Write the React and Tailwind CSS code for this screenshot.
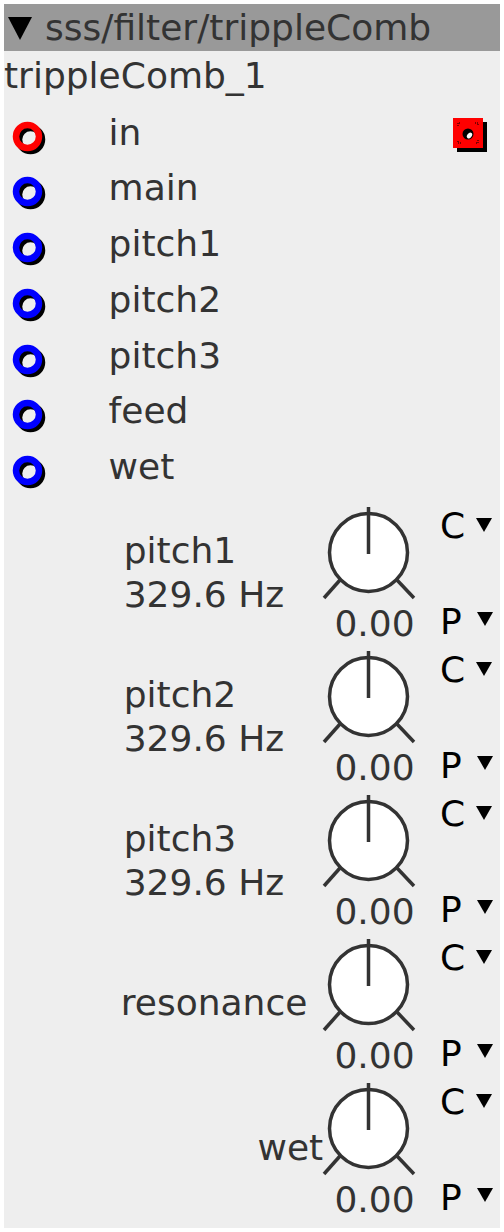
import React from "react";

const ports = [
  { name: "in", color: "#ff0000", audio: true },
  { name: "main", color: "#0000ff" },
  { name: "pitch1", color: "#0000ff" },
  { name: "pitch2", color: "#0000ff" },
  { name: "pitch3", color: "#0000ff" },
  { name: "feed", color: "#0000ff" },
  { name: "wet", color: "#0000ff" },
];

const knobs = [
  { lines: ["pitch1", "329.6 Hz"], labelClass: "w-[316px] shrink-0 whitespace-nowrap pl-[119.7px] pt-[34px] leading-[44px]" },
  { lines: ["pitch2", "329.6 Hz"], labelClass: "w-[316px] shrink-0 whitespace-nowrap pl-[119.7px] pt-[34px] leading-[44px]" },
  { lines: ["pitch3", "329.6 Hz"], labelClass: "w-[316px] shrink-0 whitespace-nowrap pl-[119.7px] pt-[34px] leading-[44px]" },
  { lines: ["resonance"], labelClass: "w-[316px] shrink-0 whitespace-nowrap pl-[116.8px] pt-[54px] leading-[44px]" },
  { lines: ["wet"], labelClass: "w-[316px] shrink-0 whitespace-nowrap pl-[253.5px] pt-[55px] leading-[44px]" },
];

function PortRing({ color }) {
  return (
    <svg width="38" height="38" viewBox="0 0 38 38" className="ml-[8px] mt-[16px] shrink-0">
      <circle cx="18.5" cy="18.5" r="11.5" fill="none" stroke="#000" strokeWidth="6.5" />
      <circle cx="15.5" cy="15.5" r="11.5" fill="none" stroke={color} strokeWidth="6.5" />
    </svg>
  );
}

function AudioOut() {
  return (
    <svg width="36" height="36" viewBox="0 0 36 36" className="ml-auto mr-[11px] mt-[13px] shrink-0">
      <rect x="4" y="4" width="30" height="30" fill="#000" />
      <rect x="0" y="0" width="30" height="30" fill="#ff0000" />
      <path d="M5 8V5h3M22 5h3v3M25 22v3h-3M8 25H5v-3" fill="none" stroke="#000" strokeWidth="1" strokeDasharray="1 1" />
      <circle cx="15" cy="16" r="5.5" fill="#000" />
      <ellipse cx="16.5" cy="17.5" rx="2.2" ry="3.2" transform="rotate(40 16.5 17.5)" fill="#fff" />
    </svg>
  );
}

function SmallArrow({ className }) {
  return (
    <svg width="16" height="14" viewBox="0 0 16 14" className={className}>
      <polygon points="0,0 16,0 8,14" fill="#000" />
    </svg>
  );
}

function Knob() {
  return (
    <svg width="100" height="110" viewBox="0 0 100 110" className="shrink-0">
      <circle cx="48.5" cy="57.5" r="39" fill="#fff" stroke="#333" strokeWidth="3.5" />
      <line x1="48.5" y1="12" x2="48.5" y2="59" stroke="#333" strokeWidth="3.5" />
      <line x1="4" y1="103" x2="20" y2="85" stroke="#333" strokeWidth="3.5" />
      <line x1="77" y1="85" x2="94" y2="103" stroke="#333" strokeWidth="3.5" />
    </svg>
  );
}

function KnobRow({ knob }) {
  return (
    <div className="flex h-[144px]">
      <div className={knob.labelClass}>
        {knob.lines.map((line) => (
          <div key={line}>{line}</div>
        ))}
      </div>
      <div className="flex w-[100px] shrink-0 flex-col">
        <Knob />
        <div className="pl-[9px] text-center leading-[37px]">0.00</div>
      </div>
      <div className="ml-[20px] flex flex-col pt-[13px] leading-9 text-black">
        <div className="flex items-start">
          <span>C</span>
          <SmallArrow className="ml-[11px] mt-[10px]" />
        </div>
        <div className="mt-[60px] flex items-start">
          <span>P</span>
          <SmallArrow className="ml-[15px] mt-[8px]" />
        </div>
      </div>
    </div>
  );
}

export default function App() {
  return (
    <div className="h-[1232px] w-[504px] bg-white p-[4px] font-['DejaVu_Sans',Verdana,sans-serif] text-[36px] text-[#333333]">
      <div className="h-[1224px] w-[496px] bg-[#eeeeee]">
        <div className="flex h-[47px] items-start bg-[#999999] leading-[47px] whitespace-nowrap">
          <svg width="24" height="23" viewBox="0 0 24 23" className="ml-[4px] mt-[13px] shrink-0">
            <polygon points="0,0 24,0 12,23" fill="#000" />
          </svg>
          <span className="ml-[13px]">sss/filter/trippleComb</span>
        </div>
        <div className="h-[53.5px] leading-[50px] whitespace-nowrap">trippleComb_1</div>
        <div className="flex flex-col">
          {ports.map((p) => (
            <div key={p.name} className="flex h-[55.8px]">
              <PortRing color={p.color} />
              <span className="ml-[58.6px] leading-[55.8px]">{p.name}</span>
              {p.audio && <AudioOut />}
            </div>
          ))}
        </div>
        {knobs.map((k) => (
          <KnobRow key={k.lines[0]} knob={k} />
        ))}
      </div>
    </div>
  );
}
